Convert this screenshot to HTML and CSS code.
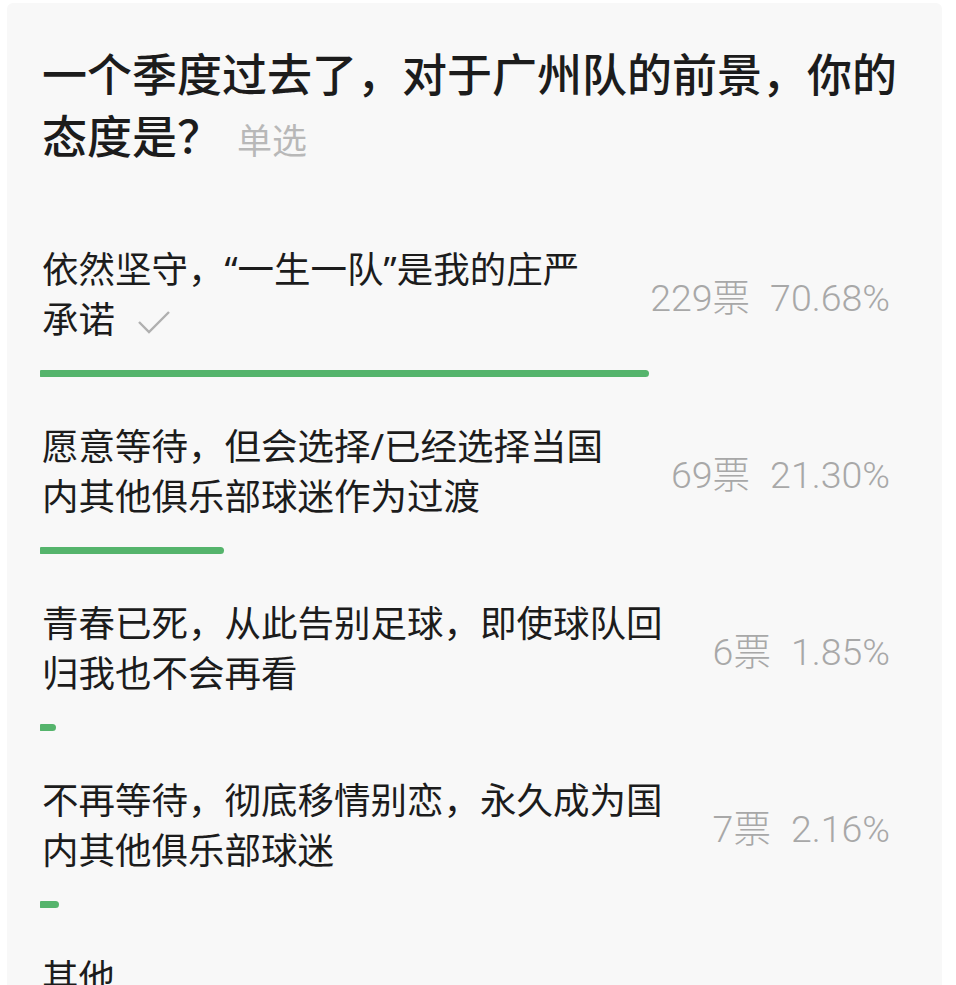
FILE: index.html
```html
<!DOCTYPE html>
<html lang="zh-CN">
<head>
    <meta charset="UTF-8">
    <title>投票</title>
    <link rel="stylesheet" href="styles.css">
</head>
<body>
    <div class="poll">
        <h1 class="poll-title">一个季度过去了，对于广州队的前景，你的态度是？<span class="poll-type">单选</span></h1>

        <div class="option">
            <div class="option-row">
                <div class="option-text">依然坚守，“一生一队”是我的庄严承诺<svg class="check" width="34" height="26" viewBox="0 0 34 26"><polyline points="2,13 12,23 32,3" fill="none" stroke="#b0b0b0" stroke-width="2.4"/></svg></div>
                <div class="option-stat"><span>229票</span><span class="pct">70.68%</span></div>
            </div>
            <div class="bar"><div class="bar-fill" style="width: 70.68%"></div></div>
        </div>

        <div class="option">
            <div class="option-row">
                <div class="option-text">愿意等待，但会选择/已经选择当国内其他俱乐部球迷作为过渡</div>
                <div class="option-stat"><span>69票</span><span class="pct">21.30%</span></div>
            </div>
            <div class="bar"><div class="bar-fill" style="width: 21.30%"></div></div>
        </div>

        <div class="option">
            <div class="option-row">
                <div class="option-text">青春已死，从此告别足球，即使球队回归我也不会再看</div>
                <div class="option-stat"><span>6票</span><span class="pct">1.85%</span></div>
            </div>
            <div class="bar"><div class="bar-fill" style="width: 1.85%"></div></div>
        </div>

        <div class="option">
            <div class="option-row">
                <div class="option-text">不再等待，彻底移情别恋，永久成为国内其他俱乐部球迷</div>
                <div class="option-stat"><span>7票</span><span class="pct">2.16%</span></div>
            </div>
            <div class="bar"><div class="bar-fill" style="width: 2.16%"></div></div>
        </div>

        <div class="option">
            <div class="option-row">
                <div class="option-text">其他<br>&nbsp;</div>
                <div class="option-stat"><span>13票</span><span class="pct">4.01%</span></div>
            </div>
            <div class="bar"><div class="bar-fill" style="width: 4.01%"></div></div>
        </div>
    </div>
</body>
</html>
```

FILE: styles.css
```css
html, body {
    margin: 0;
    padding: 0;
    background: #ffffff;
    overflow: hidden;
}
body {
    font-family: "Noto Sans CJK SC", "Noto Sans", sans-serif;
    color: #1c1c1c;
}
.poll {
    margin: 3px 14px 0 7px;
    padding: 39px 40px 0 33px;
    background: #f8f8f8;
    border-radius: 6px 6px 0 0;
    height: 1200px;
}
.poll-title {
    margin: 0 0 74px 2px;
    font-size: 45px;
    line-height: 62px;
    font-weight: 500;
    letter-spacing: 0;
}
.poll-type {
    margin-left: 15px;
    font-size: 35px;
    font-weight: 400;
    color: #b8b8b8;
}
.option {
    margin-bottom: 44px;
}
.option-row {
    display: flex;
    align-items: center;
    padding-left: 2px;
}
.option-text {
    flex: 1;
    min-width: 0;
    font-family: "Noto Sans", "Noto Sans CJK SC", sans-serif;
    font-size: 36.5px;
    line-height: 50px;
}
.check {
    margin-left: 22px;
    vertical-align: -2px;
}
.option-stat {
    flex-shrink: 0;
    margin-left: 46px;
    padding-right: 12px;
    font-family: Roboto, "Noto Sans CJK SC", sans-serif;
    font-weight: 300;
    font-size: 37.5px;
    color: #a8a8a8;
    white-space: nowrap;
}
.option-stat .pct {
    margin-left: 20px;
}
.bar {
    margin-top: 26px;
    height: 7px;
}
.bar-fill {
    height: 7px;
    min-width: 16px;
    background: #55b46c;
    border-radius: 1px 4px 4px 1px;
}
```
